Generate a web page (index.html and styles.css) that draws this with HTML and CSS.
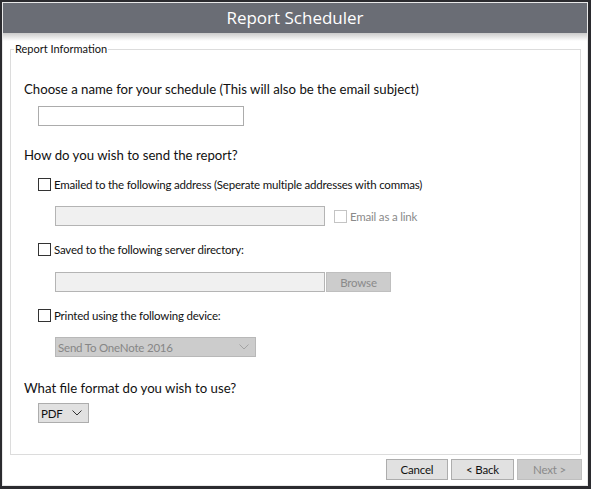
FILE: index.html
```html
<!DOCTYPE html>
<html>
<head>
<meta charset="utf-8">
<title>Report Scheduler</title>
<link rel="stylesheet" href="styles.css">
</head>
<body>
<div class="window">
  <div class="titlebar">Report Scheduler</div>
  <div class="content">
    <fieldset class="group">
      <legend class="group-title">Report Information</legend>
      <div class="question q1">Choose a name for your schedule (This will also be the email subject)</div>
      <input class="textbox name" type="text">
      <div class="question q2">How do you wish to send the report?</div>
      <label class="check row-check c1"><span class="box"></span><span>Emailed to the following address (Seperate multiple addresses with commas)</span></label>
      <div class="field-row r1">
        <span class="textbox disabled wide"></span>
        <label class="check off link"><span class="box"></span><span>Email as a link</span></label>
      </div>
      <label class="check row-check c2"><span class="box"></span><span>Saved to the following server directory:</span></label>
      <div class="field-row r2">
        <span class="textbox disabled wide"></span>
        <span class="button dim browse">Browse</span>
      </div>
      <label class="check row-check c3"><span class="box"></span><span>Printed using the following device:</span></label>
      <div class="field-row r3">
        <span class="select dim device"><span class="select-text">Send To OneNote 2016</span>
          <svg class="chev" width="10" height="6" viewBox="0 0 10 6"><polyline points="0.5,0.5 5,5 9.5,0.5" fill="none" stroke="#a3a3a3" stroke-width="1"/></svg>
        </span>
      </div>
      <div class="question q3">What file format do you wish to use?</div>
      <span class="select format"><span class="select-text">PDF</span>
        <svg class="chev" width="10" height="6" viewBox="0 0 10 6"><polyline points="0.5,0.5 5,5 9.5,0.5" fill="none" stroke="#333" stroke-width="1"/></svg>
      </span>
    </fieldset>
    <div class="buttons">
      <span class="button cancel">Cancel</span>
      <span class="button back">&lt; Back</span>
      <span class="button dim next">Next &gt;</span>
    </div>
  </div>
</div>
</body>
</html>
```

FILE: styles.css
```css
* { box-sizing: border-box; }

html, body {
  margin: 0;
  padding: 0;
}

body {
  width: 591px;
  height: 489px;
  overflow: hidden;
  background: #2b2b2f;
  font-family: "Lato", "Noto Sans", sans-serif;
  color: #111;
}

.window {
  margin: 2px 3px 3px 2px;
  height: 484px;
  border: 1px solid #e9e9e9;
  background: #fff;
  display: flex;
  flex-direction: column;
}

.titlebar {
  height: 30px;
  background: #6a6d75;
  color: #fff;
  font-family: "Open Sans", "Noto Sans", sans-serif;
  font-size: 17px;
  line-height: 30px;
  text-align: center;
}

.content {
  flex: 1;
  display: flex;
  flex-direction: column;
  padding: 0 6px 0 7px;
  background: linear-gradient(#cbcbcb, #ffffff 8px) no-repeat;
}

.group {
  margin: 10px 0 0 0;
  padding: 0;
  height: 412px;
  border: 1px solid #dcdcdc;
  display: flex;
  flex-direction: column;
  align-items: flex-start;
}

.group-title {
  margin-left: 3px;
  padding: 0 1px;
  font-size: 11px;
  line-height: 12px;
  color: #111;
}

.question {
  margin-left: 13px;
  font-size: 13.2px;
  line-height: 18px;
  color: #111;
}

.q1 { margin-top: 25px; }
.q2 { margin-top: 20px; }
.q3 { margin-top: 22px; }

.textbox {
  display: block;
  height: 20px;
  border: 1px solid #acacac;
  background: #fff;
  padding: 0;
  margin: 0;
  font: inherit;
  outline: none;
}

.name {
  margin: 8px 0 0 27px;
  width: 206px;
}

.textbox.disabled {
  background: #f0f0f0;
  border-color: #b4b4b4;
}

.wide { width: 270px; }

.check {
  display: flex;
  align-items: center;
  font-size: 11.5px;
  letter-spacing: -0.2px;
  line-height: 15px;
  height: 15px;
  color: #111;
}

.check .box {
  width: 13px;
  height: 13px;
  border: 1px solid #333;
  background: #fff;
  margin-right: 3px;
  flex: none;
}

.row-check { margin-left: 27px; }
.c1 { margin-top: 13px; }
.c2 { margin-top: 16px; }
.c3 { margin-top: 16px; }

.check.off { color: #8a8a8a; }
.check.off .box { border-color: #c4c4c4; }

.field-row {
  display: flex;
  align-items: center;
  margin-left: 44px;
}

.r1 { margin-top: 14px; }
.r2 { margin-top: 15px; }
.r3 { margin-top: 14px; }

.link { margin-left: 9px; }

.button {
  display: flex;
  align-items: center;
  justify-content: center;
  height: 21px;
  border: 1px solid #adadad;
  background: #e1e1e1;
  font-size: 11.5px;
  letter-spacing: -0.2px;
  color: #111;
}

.button.dim {
  background: #cccccc;
  border-color: #bfbfbf;
  color: #8a8a8a;
}

.browse {
  width: 65px;
  height: 20px;
  margin-left: 1px;
}

.select {
  display: flex;
  align-items: center;
  justify-content: space-between;
  height: 20px;
  border: 1px solid #adadad;
  background: #e1e1e1;
  font-size: 11.5px;
  letter-spacing: -0.2px;
  color: #111;
}

.select.dim {
  background: #cccccc;
  border-color: #b8b8b8;
  color: #868686;
}

.select-text { padding-left: 2px; }

.device {
  width: 201px;
  padding-right: 6px;
}

.format {
  margin: 6px 0 0 27px;
  width: 51px;
  padding-right: 6px;
}

.chev { display: block; }

.buttons {
  display: flex;
  justify-content: flex-end;
  gap: 3px;
  margin: 4px -1px 0 0;
}

.cancel { width: 62px; }
.back { width: 63px; }
.next { width: 65px; }
```
